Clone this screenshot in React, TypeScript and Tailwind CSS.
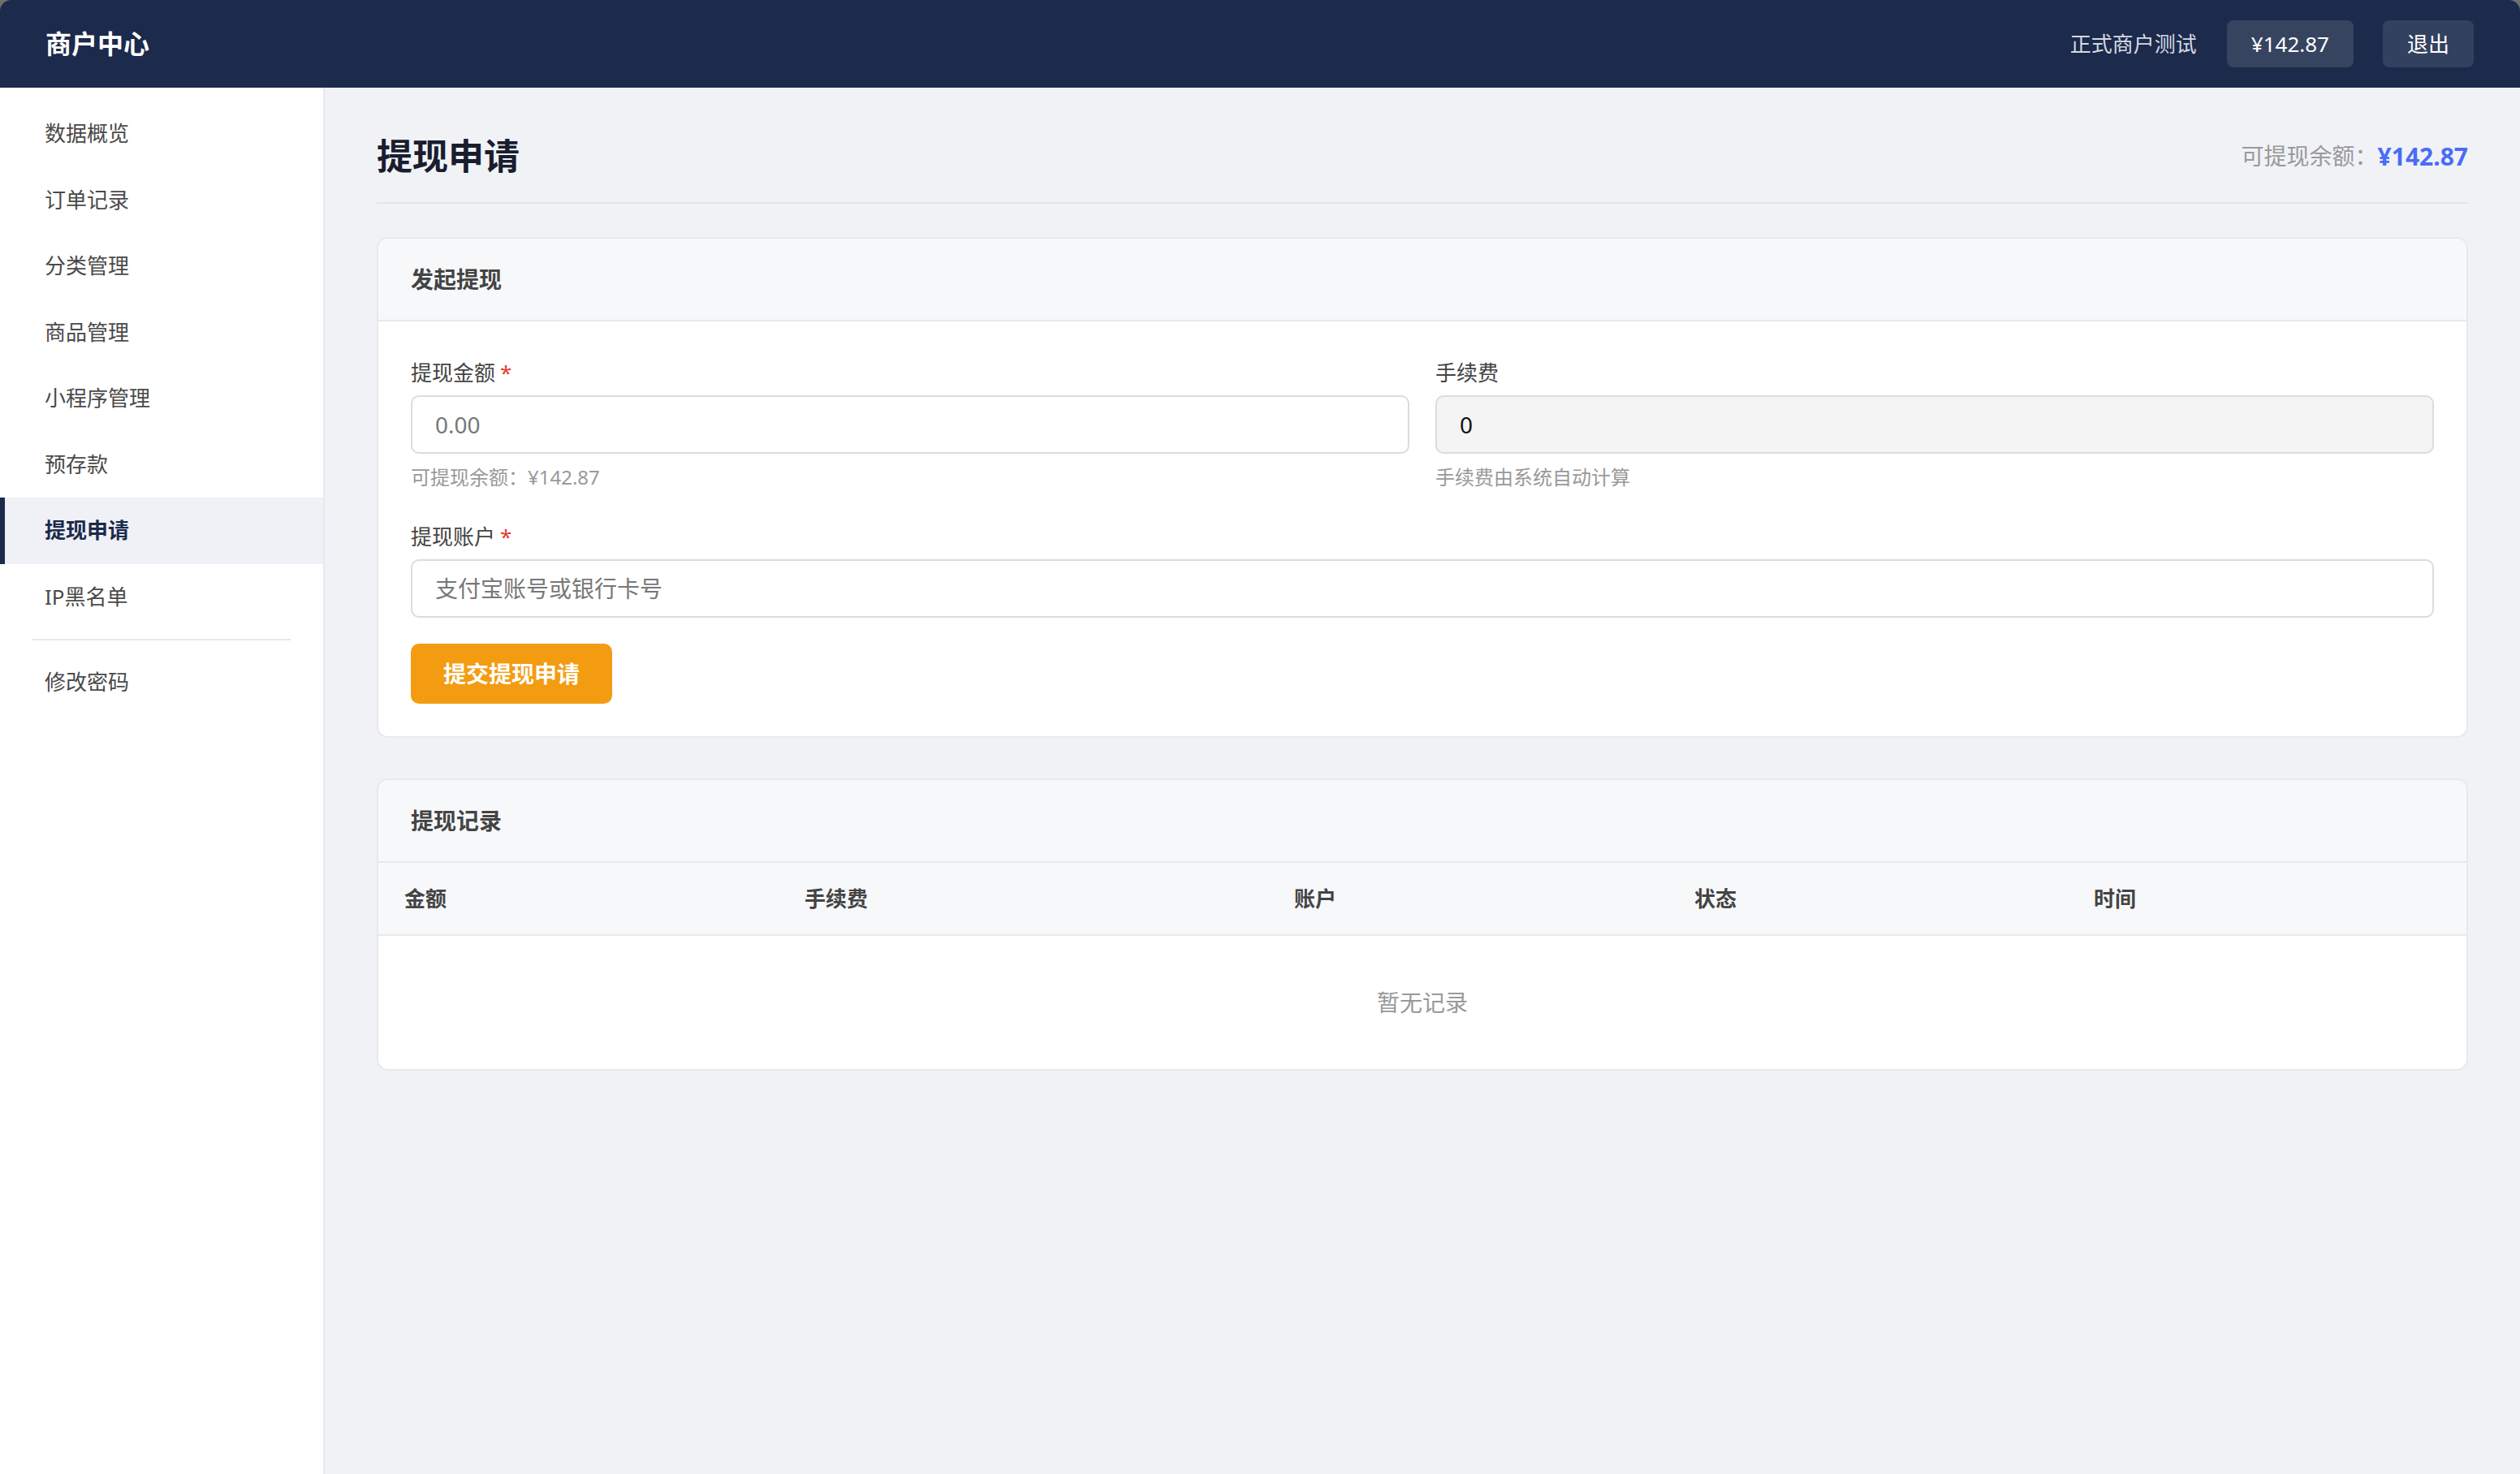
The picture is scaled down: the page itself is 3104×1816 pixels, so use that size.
import React from "react";

const font = "font-['Noto_Sans','Noto_Sans_CJK_SC',sans-serif]";

const navItems = ["数据概览", "订单记录", "分类管理", "商品管理", "小程序管理", "预存款", "提现申请", "IP黑名单"];
const cols = ["金额", "手续费", "账户", "状态", "时间"];

function Card({ title, children }: { title: string; children: React.ReactNode }) {
  return (
    <div className="bg-white border-2 border-[#e8e9ec] rounded-[14px] overflow-hidden">
      <div className="bg-[#f7f8fa] border-b-2 border-[#e8e9ec] px-[40px] h-[102px] flex items-center">
        <span className="text-[28px] font-bold text-[#444]">{title}</span>
      </div>
      {children}
    </div>
  );
}

export default function App() {
  return (
    <div className={`${font} h-screen flex flex-col bg-[#6f6f6f]`}>
      {/* Top bar */}
      <header className="h-[108px] shrink-0 bg-[#1c2a4b] rounded-t-[14px] flex items-center justify-between pl-[56px] pr-[57px]">
        <span className="text-[32px] font-bold text-white">商户中心</span>
        <div className="flex items-center">
          <span className="text-[26px] text-[#d5d9e2]">正式商户测试</span>
          <span className="ml-[37px] h-[58px] px-[30px] flex items-center rounded-[8px] bg-[#364460] text-[26px] text-white">¥142.87</span>
          <button className="ml-[36px] h-[58px] px-[30px] flex items-center rounded-[8px] bg-[#334160] text-[26px] text-white">退出</button>
        </div>
      </header>

      <div className="flex-1 flex min-h-0">
        {/* Sidebar */}
        <aside className="w-[400px] shrink-0 bg-white border-r-2 border-[#e6e8ee] pt-[16px]">
          {navItems.map((n) => {
            const active = n === "提现申请";
            return (
              <div
                key={n}
                className={`h-[81.5px] flex items-center pl-[49px] text-[26px] border-l-[6px] ${active ? "border-[#1c2a4b] bg-[#eff1f6] text-[#1c2a4b] font-bold" : "border-transparent text-[#4a4a4a]"}`}
              >
                {n}
              </div>
            );
          })}
          <div className="mx-[40px] my-[11px] h-[2px] bg-[#e6e8ee]" />
          <div className="h-[81.5px] flex items-center pl-[55px] text-[26px] text-[#4a4a4a]">修改密码</div>
        </aside>

        {/* Main */}
        <main className="flex-1 bg-[#f0f2f6] px-[64px] pt-[53px]">
          <div className="h-[62px] flex items-center justify-between">
            <h1 className="text-[44px] font-bold text-[#1a1d2e]">提现申请</h1>
            <div className="flex items-center">
              <span className="text-[28px] text-[#999]">可提现余额：</span>
              <span className="text-[30px] font-bold text-[#4a6cf7]">¥142.87</span>
            </div>
          </div>
          <div className="mt-[26px] h-[2px] bg-[#e3e5ea]" />

          <div className="mt-[41px]">
            <Card title="发起提现">
              <div className="px-[40px] pt-[44px] pb-[40px]">
                <div className="grid grid-cols-2 gap-x-[32px]">
                  <div>
                    <div className="h-[39px] flex items-center text-[26px] text-[#444]">
                      提现金额<span className="ml-[6px] text-[#e53935]">*</span>
                    </div>
                    <input
                      className="mt-[8px] w-full h-[72px] border-2 border-[#dcdcdc] rounded-[10px] px-[28px] text-[28px] text-[#333] placeholder:text-[#777] bg-white outline-none"
                      placeholder="0.00"
                    />
                    <div className="mt-[11px] h-[36px] flex items-center text-[24px] text-[#999]">可提现余额：¥142.87</div>
                  </div>
                  <div>
                    <div className="h-[39px] flex items-center text-[26px] text-[#444]">手续费</div>
                    <input
                      readOnly
                      value="0"
                      className="mt-[8px] w-full h-[72px] border-2 border-[#dcdcdc] rounded-[10px] px-[28px] text-[28px] text-[#111] bg-[#f4f4f4] outline-none"
                    />
                    <div className="mt-[11px] h-[36px] flex items-center text-[24px] text-[#999]">手续费由系统自动计算</div>
                  </div>
                </div>

                <div className="mt-[36px] h-[39px] flex items-center text-[26px] text-[#444]">
                  提现账户<span className="ml-[6px] text-[#e53935]">*</span>
                </div>
                <input
                  className="mt-[8px] w-full h-[72px] border-2 border-[#dcdcdc] rounded-[10px] px-[28px] text-[28px] text-[#333] placeholder:text-[#777] bg-white outline-none"
                  placeholder="支付宝账号或银行卡号"
                />

                <button className="mt-[32px] h-[74px] px-[40px] rounded-[10px] bg-[#f39c12] text-[28px] font-semibold text-white">
                  提交提现申请
                </button>
              </div>
            </Card>
          </div>

          <div className="mt-[50px]">
            <Card title="提现记录">
              <div className="grid grid-cols-[493px_603px_493px_492px_1fr] h-[90px] items-center bg-[#f7f8fa] border-b-2 border-[#e8e9ec]">
                {cols.map((c) => (
                  <div key={c} className="px-[32px] text-[26px] font-bold text-[#444]">{c}</div>
                ))}
              </div>
              <div className="h-[164px] flex items-center justify-center text-[28px] text-[#999]">暂无记录</div>
            </Card>
          </div>
        </main>
      </div>
    </div>
  );
}
